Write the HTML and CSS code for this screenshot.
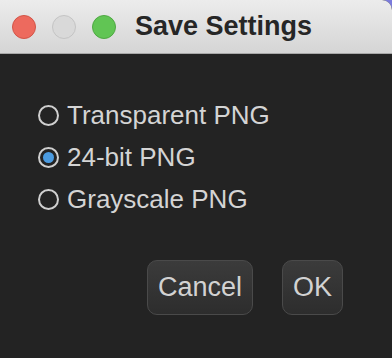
FILE: index.html
```html
<!DOCTYPE html>
<html lang="en">

<head>
    <meta charset="UTF-8">
    <meta name="viewport" content="width=device-width, initial-scale=1.0">
    <title>Save Settings</title>
    <link rel="stylesheet" href="styles.css">
</head>

<body>
    <div class="window">
        <div class="titlebar">
            <div class="lights">
                <span class="light red"></span>
                <span class="light gray"></span>
                <span class="light green"></span>
            </div>
            <div class="title">Save Settings</div>
        </div>
        <div class="content">
            <ul class="options">
                <li class="option"><span class="radio"></span>Transparent PNG</li>
                <li class="option"><span class="radio checked"></span>24-bit PNG</li>
                <li class="option"><span class="radio"></span>Grayscale PNG</li>
            </ul>
            <div class="buttons">
                <button class="btn cancel">Cancel</button>
                <button class="btn ok">OK</button>
            </div>
        </div>
    </div>
</body>

</html>
```

FILE: styles.css
```css
* {
    margin: 0;
    padding: 0;
    box-sizing: border-box;
}

body {
    background-color: #7b7bdc;
    font-family: "Liberation Sans", Arial, sans-serif;
}

.window {
    width: 392px;
    height: 358px;
    background-color: #232323;
    border-top-right-radius: 10px;
    overflow: hidden;
}

.titlebar {
    display: flex;
    align-items: center;
    height: 54px;
    padding-left: 12px;
    background: linear-gradient(#ececec, #d5d5d5);
    border-bottom: 1px solid #a8a8a8;
}

.lights {
    display: flex;
    gap: 16px;
}

.light {
    width: 24px;
    height: 24px;
    border-radius: 50%;
}

.red {
    background-color: #ed6a5e;
    border: 1px solid #d25548;
}

.gray {
    background-color: #d9d9d9;
    border: 1px solid #c4c4c4;
}

.green {
    background-color: #61c554;
    border: 1px solid #4fa843;
}

.title {
    margin-left: 19px;
    font-size: 27px;
    font-weight: bold;
    color: #262626;
}

.content {
    padding: 40px 49px 0 38px;
}

.options {
    list-style: none;
}

.option {
    display: flex;
    align-items: center;
    height: 42px;
    font-size: 26px;
    color: #d4d4d4;
}

.radio {
    width: 21px;
    height: 21px;
    border: 2px solid #cfcfcf;
    border-radius: 50%;
    margin-right: 8px;
    display: flex;
    align-items: center;
    justify-content: center;
}

.radio.checked::after {
    content: "";
    width: 11px;
    height: 11px;
    border-radius: 50%;
    background-color: #4b9be0;
}

.buttons {
    display: flex;
    justify-content: flex-end;
    gap: 29px;
    margin-top: 40px;
}

.btn {
    height: 55px;
    border: 1.5px solid #4a4a4a;
    border-radius: 10px;
    background: linear-gradient(#3b3b3b, #2d2d2d);
    color: #d2d2d2;
    font-family: "Liberation Sans", Arial, sans-serif;
    font-size: 27px;
}

.cancel {
    width: 106px;
}

.ok {
    width: 61px;
}
```
